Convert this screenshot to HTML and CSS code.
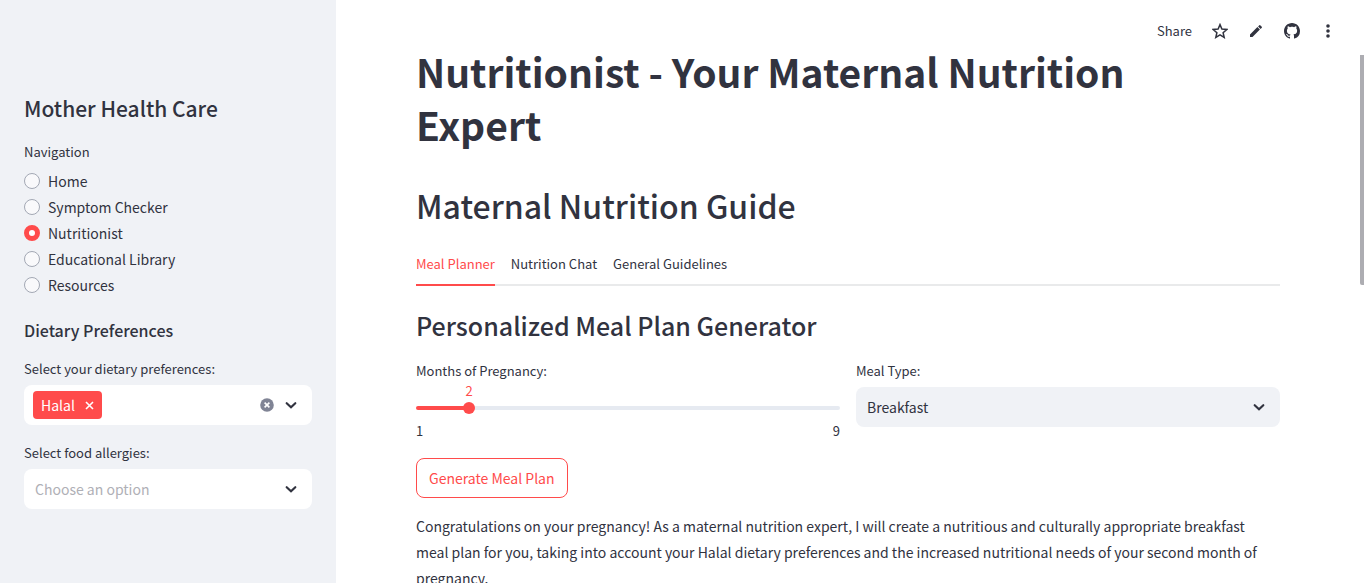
FILE: index.html
```html
<!DOCTYPE html>
<html lang="en">
<head>
    <meta charset="UTF-8">
    <meta name="viewport" content="width=device-width, initial-scale=1.0">
    <title>Mother Health Care</title>
    <link rel="stylesheet" href="styles.css">
</head>
<body>
    <div class="app">
        <aside class="sidebar">
            <h2 class="sidebar-title">Mother Health Care</h2>

            <fieldset class="nav">
                <legend class="label">Navigation</legend>
                <label class="nav-item"><input type="radio" name="page">Home</label>
                <label class="nav-item"><input type="radio" name="page">Symptom Checker</label>
                <label class="nav-item"><input type="radio" name="page" checked>Nutritionist</label>
                <label class="nav-item"><input type="radio" name="page">Educational Library</label>
                <label class="nav-item"><input type="radio" name="page">Resources</label>
            </fieldset>

            <h3 class="sidebar-subtitle">Dietary Preferences</h3>

            <div class="field">
                <label class="label" for="diet">Select your dietary preferences:</label>
                <div class="box box-white">
                    <span class="tag">Halal
                        <button class="icon-btn" type="button" aria-label="Remove Halal">
                            <svg width="9" height="9" viewBox="0 0 9 9"><path d="M1 1l7 7M8 1l-7 7" stroke="currentColor" stroke-width="1.6"/></svg>
                        </button>
                    </span>
                    <input id="diet" class="box-input" type="text">
                    <button class="icon-btn clear" type="button" aria-label="Clear all">
                        <svg width="14" height="14" viewBox="0 0 14 14"><circle cx="7" cy="7" r="6.8" fill="currentColor"/><path d="M4.6 4.6l4.8 4.8M9.4 4.6l-4.8 4.8" stroke="#fff" stroke-width="1.6"/></svg>
                    </button>
                    <svg class="chevron" width="12" height="8" viewBox="0 0 12 8"><path d="M1.7 2.2L6 6.2l4.3-4" fill="none" stroke="currentColor" stroke-width="2.2" stroke-linecap="round"/></svg>
                </div>
            </div>

            <div class="field">
                <label class="label" for="allergies">Select food allergies:</label>
                <div class="box box-white">
                    <input id="allergies" class="box-input" type="text" placeholder="Choose an option">
                    <svg class="chevron" width="12" height="8" viewBox="0 0 12 8"><path d="M1.7 2.2L6 6.2l4.3-4" fill="none" stroke="currentColor" stroke-width="2.2" stroke-linecap="round"/></svg>
                </div>
            </div>
        </aside>

        <main class="main">
            <header class="toolbar">
                <button class="tool share" type="button">Share</button>
                <button class="tool" type="button" aria-label="Favorite">
                    <svg width="16" height="16" viewBox="0 0 16 16"><path d="M8 1.6l1.9 4.5 4.9.4-3.7 3.2 1.1 4.7L8 11.9l-4.200 2.500 1.100-4.700L1.200 6.500l4.900-.4z" fill="none" stroke="currentColor" stroke-width="1.5"/></svg>
                </button>
                <button class="tool" type="button" aria-label="Edit">
                    <svg width="16" height="16" viewBox="0 0 16 16"><path d="M2 11.500V14h2.500l7.400-7.400-2.500-2.500zM13.800 4.700a.7.700 0 0 0 0-.9l-1.600-1.600a.7.700 0 0 0-.9 0l-1.200 1.200 2.500 2.500z" fill="currentColor"/></svg>
                </button>
                <button class="tool" type="button" aria-label="View source on GitHub">
                    <svg width="16" height="16" viewBox="0 0 16 16"><path fill="currentColor" d="M8 0C3.580 0 0 3.580 0 8c0 3.540 2.290 6.530 5.470 7.590.4.070.55-.17.55-.38 0-.19-.01-.82-.01-1.490-2.010.37-2.530-.49-2.690-.94-.09-.23-.48-.94-.82-1.130-.28-.15-.68-.52-.01-.53.63-.01 1.080.58 1.230.82.72 1.210 1.870.87 2.330.66.07-.52.28-.87.51-1.070-1.780-.2-3.640-.89-3.640-3.950 0-.87.31-1.590.82-2.150-.08-.2-.36-1.020.08-2.120 0 0 .67-.21 2.200.82.64-.18 1.320-.27 2-.27s1.360.09 2 .27c1.530-1.040 2.200-.82 2.200-.82.44 1.100.16 1.920.08 2.120.51.56.82 1.270.82 2.150 0 3.070-1.870 3.750-3.650 3.950.29.25.54.73.54 1.480 0 1.070-.01 1.930-.01 2.200 0 .21.15.46.55.38A8.010 8.010 0 0 0 16 8c0-4.420-3.580-8-8-8z"/></svg>
                </button>
                <button class="tool" type="button" aria-label="More options">
                    <svg width="16" height="16" viewBox="0 0 16 16" fill="currentColor"><circle cx="8" cy="3" r="1.8"/><circle cx="8" cy="8" r="1.8"/><circle cx="8" cy="13" r="1.8"/></svg>
                </button>
            </header>

            <div class="content">
                <h1 class="title">Nutritionist - Your Maternal Nutrition<br>Expert</h1>
                <h2 class="subtitle">Maternal Nutrition Guide</h2>

                <div class="tabs" role="tablist">
                    <button class="tab active" type="button" role="tab" aria-selected="true">Meal Planner</button>
                    <button class="tab" type="button" role="tab" aria-selected="false">Nutrition Chat</button>
                    <button class="tab" type="button" role="tab" aria-selected="false">General Guidelines</button>
                </div>

                <h3 class="section-title">Personalized Meal Plan Generator</h3>

                <div class="columns">
                    <div class="slider-field">
                        <label class="label" for="months">Months of Pregnancy:</label>
                        <div class="slider">
                            <output class="slider-value" for="months">2</output>
                            <input id="months" type="range" min="1" max="9" value="2">
                        </div>
                        <div class="slider-range"><span>1</span><span>9</span></div>
                    </div>
                    <div class="select-field">
                        <label class="label" for="meal">Meal Type:</label>
                        <div class="box box-gray">
                            <select id="meal" class="box-input">
                                <option>Breakfast</option>
                            </select>
                            <svg class="chevron" width="12" height="8" viewBox="0 0 12 8"><path d="M1.7 2.2L6 6.2l4.3-4" fill="none" stroke="currentColor" stroke-width="2.2" stroke-linecap="round"/></svg>
                        </div>
                    </div>
                </div>

                <button class="generate" type="button">Generate Meal Plan</button>

                <p class="answer">Congratulations on your pregnancy! As a maternal nutrition expert, I will create a nutritious and culturally appropriate breakfast meal plan for you, taking into account your Halal dietary preferences and the increased nutritional needs of your second month of pregnancy.</p>
            </div>
        </main>
        <div class="scrollbar"></div>
    </div>
</body>
</html>
```

FILE: styles.css
```css
* {
    box-sizing: border-box;
}
body {
    margin: 0;
    font-family: "Source Sans Pro", "Noto Sans CJK SC", sans-serif;
    font-size: 14px;
    line-height: 26px;
    color: #31333f;
    background-color: #fff;
}
h1, h2, h3, p {
    margin: 0;
}
h2, h3 {
    font-weight: 500;
}
button, input, select {
    font: inherit;
    color: inherit;
    margin: 0;
    padding: 0;
    border: none;
    background: none;
}
svg {
    display: block;
}
.app {
    display: flex;
    height: 100vh;
    overflow: hidden;
}

/* sidebar */
.sidebar {
    flex: none;
    width: 336px;
    padding: 93px 24px 24px;
    background-color: #f0f2f6;
}
.sidebar-title {
    font-size: 21px;
    line-height: 30px;
}
.sidebar-subtitle {
    font-size: 16px;
    line-height: 24px;
    margin: 20px 0 17px;
}
.label {
    display: block;
    padding: 0;
    font-size: 13px;
    line-height: 20px;
}
.nav {
    margin: 19px 0 0;
    padding: 0;
    border: none;
}
.nav .label {
    margin-bottom: 6px;
}
.nav-item {
    display: flex;
    align-items: center;
    gap: 8px;
}
.nav-item input {
    appearance: none;
    width: 16px;
    height: 16px;
    border: 1px solid #a3a8b4;
    border-radius: 50%;
    background-color: #f9f9fb;
}
.nav-item input:checked {
    border: 5px solid #ff4b4b;
    background-color: #fff;
}
.field {
    margin-bottom: 18px;
}
.box {
    display: flex;
    align-items: center;
    height: 40px;
    margin-top: 6px;
    padding: 0 15px 0 9px;
    border-radius: 8px;
}
.box-white {
    background-color: #fff;
}
.box-gray {
    position: relative;
    padding: 0;
    background-color: #f0f2f6;
}
.box-input {
    flex: 1;
    min-width: 0;
    height: 40px;
    padding-left: 2px;
    outline: none;
    appearance: none;
}
.box-input::placeholder {
    color: #afb0b6;
    opacity: 1;
}
.box-gray .box-input {
    padding: 0 40px 0 11px;
}
.box-gray .chevron {
    position: absolute;
    right: 15px;
    pointer-events: none;
}
.tag {
    display: flex;
    align-items: center;
    gap: 10px;
    height: 28px;
    padding: 0 8px;
    border-radius: 4px;
    color: #fff;
    background-color: #ff4b4b;
}
.icon-btn {
    cursor: pointer;
}
.clear {
    margin-right: 11px;
    color: #808495;
}

/* main area */
.main {
    flex: 1;
    min-width: 0;
}
.toolbar {
    display: flex;
    justify-content: flex-end;
    align-items: center;
    gap: 20px;
    height: 45px;
    padding: 16px 24px 0 0;
}
.tool {
    cursor: pointer;
}
.share {
    font-size: 13px;
}
.content {
    padding: 0 80px;
}
.title {
    font-size: 39px;
    line-height: 53px;
    font-weight: 700;
}
.subtitle {
    font-size: 32px;
    line-height: 44px;
    margin-top: 32px;
}
.tabs {
    display: flex;
    gap: 16px;
    height: 42px;
    margin-top: 17px;
    border-bottom: 2px solid #e9eaeb;
}
.tab {
    height: 42px;
    font-size: 13px;
    cursor: pointer;
    border-bottom: 2px solid transparent;
}
.tab.active {
    color: #ff4b4b;
    border-bottom-color: #ff4b4b;
}
.section-title {
    font-size: 25px;
    line-height: 34px;
    margin: 22px 0 19px;
}
.columns {
    display: grid;
    grid-template-columns: 1fr 1fr;
    gap: 16px;
}
.slider {
    position: relative;
    height: 40px;
    padding-top: 20px;
}
.slider-value {
    position: absolute;
    top: 0;
    left: 12.5%;
    line-height: 20px;
    font-size: 13px;
    color: #ff4b4b;
    transform: translateX(-50%);
}
.slider::before {
    content: "";
    display: block;
    height: 4px;
    margin-top: 5px;
    border-radius: 2px;
    background: linear-gradient(to right, #ff4b4b 12.5%, #e6eaf1 12.5%);
}
/* wider than the track by half a thumb on each side */
.slider input {
    appearance: none;
    display: block;
    width: calc(100% + 12px);
    height: 12px;
    margin: -8px -6px 0;
}
.slider input::-webkit-slider-thumb {
    appearance: none;
    width: 12px;
    height: 12px;
    border-radius: 50%;
    background-color: #ff4b4b;
}
.slider-range {
    display: flex;
    justify-content: space-between;
    font-size: 13px;
    line-height: 20px;
}
.generate {
    height: 40px;
    margin-top: 17px;
    padding: 0 12px;
    border: 1px solid #ff4b4b;
    border-radius: 8px;
    color: #ff4b4b;
    cursor: pointer;
}
.answer {
    margin-top: 15px;
}
.scrollbar {
    flex: none;
    width: 4px;
    height: 230px;
    margin-top: 55px;
    border-radius: 0 0 0 2px;
    background-color: #adadb2;
}
```
